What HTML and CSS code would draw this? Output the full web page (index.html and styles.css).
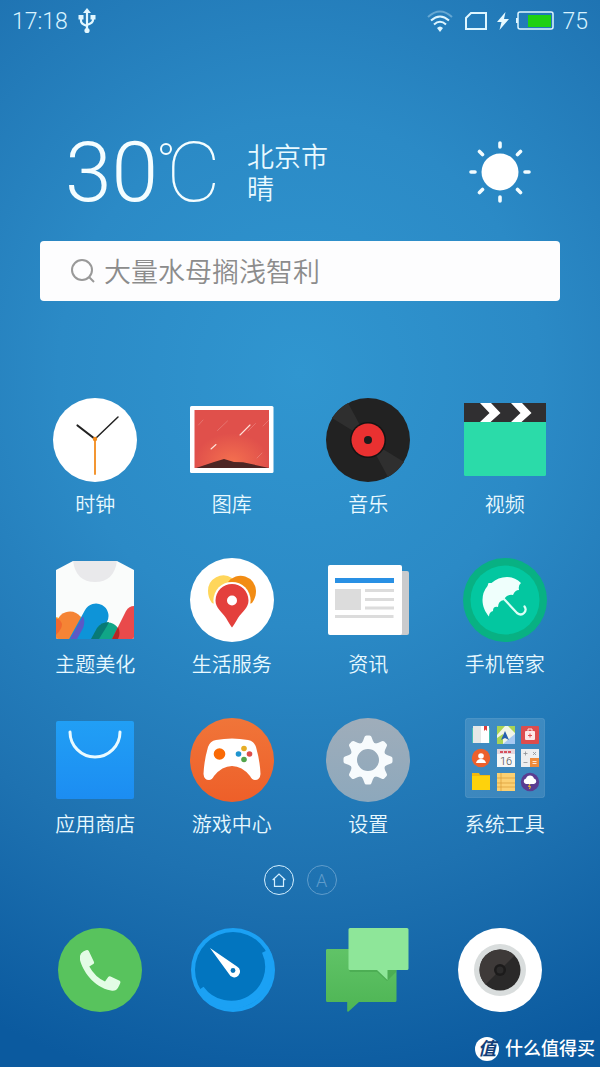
FILE: index.html
```html
<!DOCTYPE html>
<html lang="zh-CN">
<head>
<meta charset="utf-8">
<meta name="viewport" content="width=device-width, initial-scale=1">
<title>桌面</title>
<link rel="stylesheet" href="styles.css">
</head>
<body>
<header class="status">
  <div class="status-side">
    <time>17:18</time>
    <svg width="18" height="26" viewBox="0 0 18 26" fill="#e2f7ff" stroke="#e2f7ff" aria-label="USB"><path d="M9 4v18M3 9v4q0 3 6 5M15 9v3q0 3-6 5" fill="none" stroke-width="2.200"/><path d="M9 0l4 5H5zM.5 7h5v4.500h-5zM12.500 7h5v4.500h-5z" stroke="none"/><circle cx="9" cy="22.500" r="2.600" stroke="none"/></svg>
  </div>
  <div class="status-side">
    <svg class="wifi" width="26" height="24" viewBox="0 0 26 24" fill="none" stroke="#dff6ff" stroke-width="2" aria-label="Wi-Fi"><path d="M1 8Q13-3 25 8" opacity=".35"/><path d="M4 11.500Q13 3.500 22 11.500M7 15.500Q13 10 19 15.500"/><path d="M10 19q3-3 6 0l-3 4z" fill="#dff6ff" stroke="none"/></svg>
    <svg class="sim" width="22" height="18" viewBox="0 0 22 18" fill="none" stroke="#dff6ff" stroke-width="2"><path d="M6 1h15v16H1V6z"/></svg>
    <svg class="bolt" width="12" height="18" viewBox="0 0 12 18" fill="#e8faff"><path d="M8.500 0L0 10h4.500L2.500 18 12 7H7z"/></svg>
    <svg class="battery" width="38" height="20" viewBox="0 0 38 20"><rect x="2" y="1" width="35" height="17" rx="2" fill="none" stroke="#dff6ff" stroke-width="1.500"/><path d="M0 7h2v5H0z" fill="#dff6ff"/><path d="M12 4h23v12H12z" fill="#1fd012"/></svg>
    <span>75</span>
  </div>
</header>

<main>
  <section class="weather">
    <div class="temp">30<span class="degree" role="img" aria-label="度"></span><span class="unit">C</span></div>
    <div class="place"><div>北京市</div><div>晴</div></div>
    <svg class="sun" width="62" height="62" viewBox="0 0 62 62" aria-label="晴"><circle cx="31" cy="31" r="18.500" fill="#fff"/><path d="M31 2v4M31 56v4M2 31h4M56 31h4M10.500 10.500l3 3M48.500 48.500l3 3M10.500 51.500l3-3M48.500 13.500l3-3" stroke="#f2fcff" stroke-width="3.600" stroke-linecap="round"/></svg>
  </section>

  <form class="search">
    <svg width="26" height="26" viewBox="0 0 26 26" fill="none" stroke="#999" stroke-width="2"><circle cx="12" cy="12" r="10"/><path d="M19 19l5 5"/></svg>
    <input type="search" aria-label="搜索" placeholder="大量水母搁浅智利">
  </form>

  <section class="apps">
    <button class="app" type="button">
      <svg class="icon" viewBox="0 0 84 84"><circle cx="42" cy="42" r="42" fill="#fff"/><path d="M42 41L24.500 27.500" stroke="#222" stroke-width="2.200" stroke-linecap="round"/><path d="M42 41l23-22" stroke="#222" stroke-width="1.500" stroke-linecap="round"/><path d="M42 41v35" stroke="#f28b1c" stroke-width="1.800" stroke-linecap="round"/><circle cx="42" cy="41" r="2.200" fill="#f28b1c"/></svg>
      <span>时钟</span>
    </button>
    <button class="app" type="button">
      <svg class="icon" viewBox="0 0 84 84"><defs><radialGradient id="dusk" cx=".5" cy=".9" r=".5"><stop offset="0" stop-color="#f4704f"/><stop offset="1" stop-color="#e0504b"/></radialGradient></defs><rect y="8" width="83.500" height="67" rx="1.500" fill="#fff"/><path d="M4.500 12H79v58H4.500z" fill="url(#dusk)"/><path d="M6 70l18-6 10-3 10 3 9 .2L79 70z" fill="#4d2524"/><g stroke="#fff" stroke-linecap="round"><path d="M50 37l10-10M21 51l5-4.500" stroke="#ffe3da" stroke-width="1.100"/><path d="M27.500 32.500l10-9.500M8.500 27l4.500-5M67 60l5-5M73 28l5.500-5.500M58 33l7.500-7.500" opacity=".2"/></g></svg>
      <span>图库</span>
    </button>
    <button class="app" type="button">
      <svg class="icon" viewBox="0 0 84 84"><circle cx="42" cy="42" r="42" fill="#222"/><path d="M42 42L6 20A42 42 0 0 1 22 5zM42 42l20 37a42 42 0 0 0 16-15z" fill="#2f2f2f"/><circle cx="42" cy="42" r="18" fill="#141414"/><circle cx="42" cy="42" r="16.500" fill="#ea3131"/><circle cx="42" cy="42" r="4" fill="#1c1c1c"/></svg>
      <span>音乐</span>
    </button>
    <button class="app" type="button">
      <svg class="icon" viewBox="0 0 84 84"><rect x="1" y="5" width="82" height="73" rx="1.500" fill="#2bdba9"/><path d="M1 5h82v19H1z" fill="#302f31"/><path d="M17 5h11l9.500 10-10 9H17l9.500-9zM48 5h11l9.500 10-10 9H48l9.500-9z" fill="#fff"/></svg>
      <span>视频</span>
    </button>

    <button class="app" type="button">
      <svg class="icon" viewBox="0 0 84 84"><defs><clipPath id="shirt"><path d="M3 12L20 3h44l17 9v67q0 2-2 2H5q-2 0-2-2z"/></clipPath></defs><g clip-path="url(#shirt)"><path d="M0 0h84v84H0z" fill="#fafcfb"/><path d="M20 3q3 21 22 21T64 3z" fill="#e9e9eb"/><g stroke-linecap="round" fill="none"><path d="M2 66l-8 18" stroke="#fbb23c" stroke-width="14"/><path d="M17 67L2 97" stroke="#f58435" stroke-width="27"/><path d="M43 58L21 98" stroke="#0e94d8" stroke-width="25"/><path d="M55 76L46 94" stroke="#10a687" stroke-width="23"/></g><path d="M3 60q5 2 6 6 0 5-6 11z" fill="#f1682f"/><path d="M17 81l13-23q3 7-1 14l-5 9z" fill="#5b59c6"/><path d="M38 81l6-11q4-6 12-6l-2 4-8 13z" fill="#087a76"/><path d="M59 81l14-28q3-5 8-5v33z" fill="#e94a4b"/><path d="M59 81l6-12q3 6 0 12z" fill="#b42825"/></g></svg>
      <span>主题美化</span>
    </button>
    <button class="app" type="button">
      <svg class="icon" viewBox="0 0 84 84"><circle cx="42" cy="42" r="42" fill="#fff"/><path d="M22 45C19 41 18 37 18 33a15.500 15.500 0 0 1 24-13L30 48z" fill="#ffd65b"/><path d="M62 45c3-4 4-8 4-12a15.500 15.500 0 0 0-28-9l16 24z" fill="#f28c13"/><circle cx="42" cy="42.500" r="18.600" fill="#fff"/><path d="M42 69.500Q40 67 36 60C32 54 25.500 50 25.500 42.500a16.500 16.500 0 0 1 33 0C58.500 50 52 54 48 60q-4 7-6 9.500z" fill="#e4403c"/><circle cx="42" cy="42.500" r="5" fill="#fff"/></svg>
      <span>生活服务</span>
    </button>
    <button class="app" type="button">
      <svg class="icon" viewBox="0 0 84 84"><rect x="60" y="13" width="23" height="64" rx="2" fill="#cacbcd"/><rect x="2" y="7" width="74" height="70" rx="2" fill="#fff"/><path d="M9 20h59v5H9z" fill="#2990e4"/><path d="M9 31h26v21H9zM39 31h29v3H39zM39 40h29v3H39zM39 48.500h29v3H39zM9 57h58.500v3H9z" fill="#dcdcdc"/></svg>
      <span>资讯</span>
    </button>
    <button class="app" type="button">
      <svg class="icon" viewBox="0 0 84 84"><circle cx="42" cy="42" r="42" fill="#08b183"/><circle cx="42" cy="42" r="34.500" fill="#03c7a0"/><path d="M26 58.500C22 54 19.500 48 19.500 42q0-8 5-14l1-3 3 0Q35 19 44 19q8 0 14 6-3 2-2 7-4 0-6 5-7-1-9 5-6 1-6 7-5-1-5 4-4 1-4 5.500z" fill="#effffc"/><path d="M41 41l13 14q4 3 7 0 3-3 .5-6.500" fill="none" stroke="#dcfff7" stroke-width="2.200" stroke-linecap="round"/></svg>
      <span>手机管家</span>
    </button>

    <button class="app" type="button">
      <svg class="icon" viewBox="0 0 84 84"><defs><linearGradient id="bag" x2="0" y2="1"><stop stop-color="#219ff5"/><stop offset="1" stop-color="#1c8df2"/></linearGradient></defs><rect x="3" y="3" width="78" height="78" rx="2" fill="url(#bag)"/><path d="M17 14a25 25 0 0 0 50 0" fill="none" stroke="#e9faff" stroke-width="3" stroke-linecap="round"/></svg>
      <span>应用商店</span>
    </button>
    <button class="app" type="button">
      <svg class="icon" viewBox="0 0 84 84"><defs><linearGradient id="game" x2="0" y2="1"><stop stop-color="#f07539"/><stop offset="1" stop-color="#ee5f29"/></linearGradient></defs><circle cx="42" cy="42" r="42" fill="url(#game)"/><path d="M26 22q16-3 32 0 6 1 8 7 4 14 4.500 27-.5 6-5.500 6-3 0-5-4-8-10-18-10t-18 10q-2 4-5 4-5 0-5.500-6Q14 43 18 29q2-6 8-7z" fill="#fff"/><circle cx="29.500" cy="36" r="5.800" fill="#fa6a05"/><circle cx="54" cy="30.500" r="2.800" fill="#e6ad25"/><circle cx="48.500" cy="36" r="2.800" fill="#1e94cf"/><circle cx="59.500" cy="36" r="2.800" fill="#dc4e4b"/><circle cx="54" cy="41.500" r="2.800" fill="#52a44b"/></svg>
      <span>游戏中心</span>
    </button>
    <button class="app" type="button">
      <svg class="icon" viewBox="0 0 84 84"><defs><linearGradient id="metal" x2="0" y2="1"><stop stop-color="#9fadba"/><stop offset="1" stop-color="#8da8bc"/></linearGradient><path id="tooth" d="M34.500 27q3-4 4-8 .3-1.500 2-1.500h3q1.700 0 2 1.500 1 4 4 8z"/></defs><circle cx="42" cy="42" r="42" fill="url(#metal)"/><g fill="#f7fbfd"><use href="#tooth"/><use href="#tooth" transform="rotate(45 42 42)"/><use href="#tooth" transform="rotate(90 42 42)"/><use href="#tooth" transform="rotate(135 42 42)"/><use href="#tooth" transform="rotate(180 42 42)"/><use href="#tooth" transform="rotate(225 42 42)"/><use href="#tooth" transform="rotate(270 42 42)"/><use href="#tooth" transform="rotate(315 42 42)"/></g><circle cx="42" cy="42" r="14.500" fill="none" stroke="#f7fbfd" stroke-width="7"/></svg>
      <span>设置</span>
    </button>
    <button class="app" type="button">
      <svg class="icon" viewBox="0 0 84 84">
        <rect x="2.500" y=".5" width="79" height="79" rx="2" fill="#fff" fill-opacity=".13" stroke="#fff" stroke-opacity=".12"/>
        <path d="M9 10h18v15H9z" fill="#46bdb4"/><path d="M10 8h8v17h-8z" fill="#e5e8e7"/><path d="M18 8h8v17h-8z" fill="#fff"/><path d="M21 8h3v5l-1.500-1.500L21 13z" fill="#df3d3d"/>
        <path d="M34 8h18v18H34z" fill="#f2f5e7"/><path d="M34 8h8l-8 9zM45 8h7v7z" fill="#a9d355"/><path d="M34 20l6-4v10h-6z" fill="#a9d355"/><path d="M52 16v10H40l7-6z" fill="#a7c9f2"/><path d="M42 13l4 9-4-2-4 2z" fill="#275fad"/>
        <rect x="58" y="8" width="18" height="18" rx="1" fill="#dc4d4d"/><rect x="62" y="13" width="10" height="9" rx="1" fill="#fde9e6"/><path d="M65 13v-2h4v2" fill="none" stroke="#fde9e6"/><path d="M67 15.500v4M65 17.500h4" stroke="#dc4d4d"/>
        <circle cx="18" cy="40" r="9.200" fill="#ed602b"/><circle cx="18" cy="38" r="2.800" fill="#fff"/><path d="M13 45q1-4 5-4t5 4z" fill="#fff"/>
        <path d="M34 31h18v18H34z" fill="#f7f7f7"/><path d="M34 31h18v5H34z" fill="#e4d6dc"/><path d="M37 34h12" stroke="#d6505d" stroke-width="2" stroke-dasharray="3 1"/><text x="43" y="47" class="date">16</text>
        <path d="M58 31h18v18H58z" fill="#eceeef"/><path d="M67 40h9v9h-9z" fill="#f08b3a"/><path d="M60.500 35.500h4M62.500 33.500v4M60.500 44.500h4M70 34l3 3M73 34l-3 3" stroke="#8a8f94" stroke-width=".8"/><path d="M69.500 43.500h4M69.500 45.500h4" stroke="#fff" stroke-width=".8"/>
        <path d="M9 55h7l1 2h10v15H9z" fill="#f3b90d"/><path d="M9 58h18v14H9z" fill="#fed20c"/>
        <path d="M34 55h18v18H34z" fill="#fcd071"/><path d="M34 60h18M34 65h18M34 69h18M38 55v18" stroke="#d99c38" stroke-width=".7"/>
        <circle cx="67" cy="64" r="9.200" fill="#5a3d91"/><path d="M63 66a2.800 2.800 0 0 1 0-5.500 4.200 4.200 0 0 1 8 0 2.800 2.800 0 0 1 0 5.500z" fill="#fff"/><path d="M67 66l-1.500 2.500h2L66.500 71" stroke="#f3c623" fill="none"/>
      </svg>
      <span>系统工具</span>
    </button>
  </section>

  <nav class="pager" aria-label="页面">
    <button class="page current" type="button" aria-label="主页"><svg width="14" height="14" viewBox="0 0 14 14" fill="none" stroke="currentColor" stroke-width="1.200"><path d="M.7 7L7 1l6.300 6M2.500 6v7.300h9V6"/></svg></button>
    <button class="page" type="button">A</button>
  </nav>
</main>

<nav class="dock" aria-label="常用">
  <button class="app" type="button" aria-label="电话"><svg class="icon" viewBox="0 0 84 84"><circle cx="42" cy="42" r="42" fill="#58c35d"/><path d="M28 22.300q1.800-.9 2.800.8l5.200 11q.6 1.300-.7 2l-4 2.400Q37 49 47 53.500l3.200-4.500q.9-1.200 2.400-.6l9 4.300q1.300.7.7 2.200-2.300 5.600-4.300 7.100-2 1.200-5 .6C35 59 24.500 42 22 32q-.8-4 1-6.500 2-2.300 5-3.200z" fill="#e3fce5"/></svg></button>
  <button class="app" type="button" aria-label="浏览器"><svg class="icon" viewBox="0 0 84 84"><circle cx="42" cy="42" r="42" fill="#1ba1f4"/><circle cx="42" cy="42" r="38" fill="#0275bf"/><path d="M74.700 23A38 38 0 0 1 9.300 61" fill="none" stroke="#1ba1f4" stroke-width="8"/><path d="M19 20l27 18.500a5.800 5.800 0 1 1-8 7.500z" fill="#fff"/><circle cx="42" cy="42.500" r="2.400" fill="#0873b8"/></svg></button>
  <button class="app" type="button" aria-label="信息"><svg class="icon" viewBox="0 0 84 84"><defs><linearGradient id="chat" x2="0" y2="1"><stop stop-color="#60c367"/><stop offset="1" stop-color="#4eb554"/></linearGradient></defs><path d="M2 21h68q1.500 0 1.500 1.500v50q0 1.500-1.500 1.500H34L23.500 83.500q-1 .5-1.300-.5V74H2.500Q1 74 1 72.500v-50Q1 21 2 21z" fill="url(#chat)"/><path d="M24 42h47v2l-9 9-10-9H25z" fill="#3f9e48" opacity=".5"/><path d="M25 0h57q1.500 0 1.500 1.500v39q0 1.500-1.500 1.500H62.500v10L52 42H25q-1.500 0-1.500-1.500v-39Q23.500 0 25 0z" fill="#8ee699"/></svg></button>
  <button class="app" type="button" aria-label="相机"><svg class="icon" viewBox="0 0 84 84"><circle cx="42" cy="42" r="42" fill="#fff"/><circle cx="42" cy="42" r="26" fill="#d9dddd"/><circle cx="42" cy="42" r="20.500" fill="#2a2929"/><path d="M27.500 56.500a20.500 20.500 0 0 1 29-29z" fill="#3e3a39"/><circle cx="42" cy="42" r="6" fill="#1c1b1b"/><circle cx="42" cy="42" r="3.500" fill="#2c2b2b"/></svg></button>
</nav>

<footer class="credit"><span class="badge">值</span><span>什么值得买</span></footer>
</body>
</html>
```

FILE: styles.css
```css
* {
  box-sizing: border-box;
}

body {
  margin: 0;
  min-height: 100vh;
  display: flex;
  flex-direction: column;
  font-family: Roboto, "Noto Sans CJK SC", sans-serif;
  font-weight: 350;
  color: #e8f9ff;
  background: radial-gradient(ellipse 115% 68% at 50% 35%, #3096d0 0%, #2b8ac6 35%, #1e72b1 70%, #0b5a9f 100%);
}

button {
  padding: 0;
  border: 0;
  background: none;
  color: inherit;
  font: inherit;
}

svg {
  display: block;
  flex: none;
}

.status {
  display: flex;
  justify-content: space-between;
  height: 42px;
  padding: 0 12px;
  font-size: 23px;
  font-weight: 300;
  color: #d8f3ff;
}

.status-side {
  display: flex;
  align-items: center;
  gap: 10px;
}

.status-side .battery {
  margin-left: -3px;
  margin-right: -2px;
}

.status-side .sim {
  margin-left: 2px;
}

.weather {
  display: flex;
  align-items: center;
  padding: 88px 69px 27px 65px;
}

.temp {
  display: flex;
  width: 182px;
  height: 84px;
  font-size: 84px;
  font-weight: 300;
  line-height: 86px;
  color: #f4fdff;
}

.degree {
  width: 12px;
  height: 12px;
  margin: 13px -6px 0 2px;
  border: 2px solid currentColor;
  border-radius: 50%;
}

.unit {
  font-weight: 100;
}

.place {
  flex: 1;
  padding-top: 3px;
  font-size: 27px;
  line-height: 32px;
}

.search {
  display: flex;
  align-items: center;
  gap: 8px;
  height: 60px;
  margin: 0 40px;
  padding: 0 30px;
  border-radius: 4px;
  background: #fdfdfe;
}

.search input {
  flex: 1;
  min-width: 0;
  padding: 4px 0 0;
  border: 0;
  outline: 0;
  background: none;
  color: #777;
  font: inherit;
  font-size: 27px;
}

.search input::placeholder {
  color: #8c8c8c;
  opacity: 1;
}

.apps {
  display: grid;
  grid-template-columns: repeat(4, 1fr);
  row-gap: 41px;
  padding: 97px 27px 0;
}

.app {
  display: flex;
  flex-direction: column;
  align-items: center;
  gap: 11px;
  font-size: 20px;
  line-height: 24px;
}

.icon {
  width: 84px;
  height: 84px;
}

.date {
  font-size: 11px;
  text-anchor: middle;
  fill: #444;
}

.pager {
  display: flex;
  justify-content: center;
  gap: 13px;
  padding: 28px 0 33px;
}

.page {
  display: flex;
  align-items: center;
  justify-content: center;
  width: 30px;
  height: 30px;
  border: 1px solid currentColor;
  border-radius: 50%;
  font-size: 18px;
  color: #5f9ccb;
}

.page.current {
  color: #d3efff;
}

.dock {
  display: grid;
  grid-template-columns: repeat(4, 1fr);
  padding: 0 33px;
}

.credit {
  display: flex;
  justify-content: flex-end;
  align-items: center;
  gap: 6px;
  margin-top: auto;
  padding: 24px 5px 5px;
  font-size: 18px;
  line-height: 26px;
  font-weight: 500;
  color: #fff;
}

.badge {
  width: 24px;
  height: 24px;
  border-radius: 50%;
  background: #fff;
  color: #123f7a;
  font-size: 18px;
  font-style: italic;
  font-weight: 700;
  line-height: 24px;
  text-align: center;
}
```
